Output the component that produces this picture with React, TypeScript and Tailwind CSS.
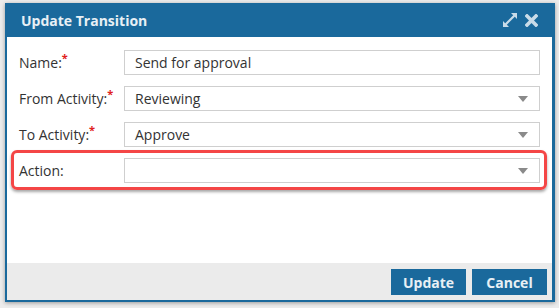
import React from "react";

const font = { fontFamily: '"Open Sans", "Noto Sans", Arial, sans-serif' };

function Caret() {
  return (
    <svg width="10" height="6" viewBox="0 0 10 6" className="shrink-0">
      <path d="M0 0 H10 L5 6 Z" fill="#8a8a8a" />
    </svg>
  );
}

function Row({ label, required, value, select }: { label: string; required?: boolean; value: string; select?: boolean }) {
  return (
    <div className="flex items-center h-[25px]">
      <div className="w-[105px] text-[14px] text-[#333] leading-none">
        {label}
        {required && <span className="text-[#e02020] text-[11px] font-bold relative -top-[6px]">*</span>}
      </div>
      <div className="flex-1 h-[25px] border border-[#cfcfcf] bg-white flex items-center pl-[10px] pr-[11px] text-[14px] text-[#333]">
        <span className="flex-1">{value}</span>
        {select && <Caret />}
      </div>
    </div>
  );
}

export default function App() {
  return (
    <div className="w-[559px] h-[308px] bg-[#ececec] pl-[5px] pt-[3px]" style={font}>
      <div className="w-[550px] h-[299px] border-2 border-t-0 border-r-[3px] border-[#1a699c] bg-white flex flex-col shadow-[0_1px_4px_rgba(0,0,0,0.35)]">
        <div className="h-[34px] bg-[#1a699c] flex items-center pl-[16px] pr-[17px] -mx-[2px] -mr-[3px]">
          <span className="flex-1 text-white/90 font-bold text-[14px]">Update Transition</span>
          <svg width="16" height="16" viewBox="0 0 16 16" className="mr-[7px]">
            <path fill="#c9dbe8" d="M9 1 H15 V7 L12.8 4.8 L4.8 12.8 L7 15 H1 V9 L3.2 11.2 L11.2 3.2 Z" />
          </svg>
          <svg width="13" height="13" viewBox="0 0 13 13">
            <path d="M2 2 L11 11 M11 2 L2 11" stroke="#c9dbe8" strokeWidth="3.6" strokeLinecap="square" />
          </svg>
        </div>
        <div className="flex-1 flex flex-col gap-[11px] pt-[13px] pl-[12px] pr-[12px]">
          <Row label="Name:" required value="Send for approval" />
          <Row label="From Activity:" required value="Reviewing" select />
          <Row label="To Activity:" required value="Approve" select />
          <div className="relative">
            <div className="absolute -left-[8px] -right-[7px] -top-[8px] -bottom-[7px] border-[3px] border-[#f44646] rounded-[6px] shadow-[0_2px_3px_rgba(0,0,0,0.35)]" />
            <Row label="Action:" value="" select />
          </div>
        </div>
        <div className="h-[37px] bg-[#ebebeb] flex items-start justify-end gap-[6px] pt-[6px] pr-[5px]">
          <button className="w-[75px] h-[26px] bg-[#1a699c] text-white/90 font-bold text-[14px]">Update</button>
          <button className="w-[75px] h-[26px] bg-[#1a699c] text-white/90 font-bold text-[14px]">Cancel</button>
        </div>
      </div>
    </div>
  );
}
